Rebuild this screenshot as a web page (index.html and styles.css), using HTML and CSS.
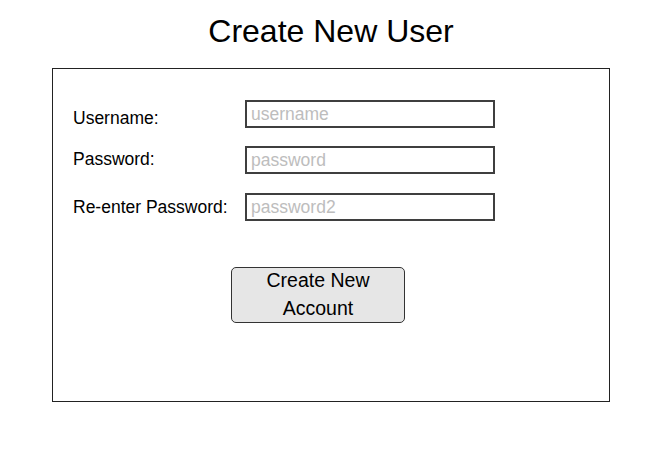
FILE: index.html
```html
<!DOCTYPE html>
<html lang="en">
<head>
<meta charset="utf-8">
<title>Create New User</title>
<link rel="stylesheet" href="styles.css">
</head>
<body>
<div class="page">
  <h1 class="title">Create New User</h1>
  <div class="card">
    <form class="form">
      <label class="label label-user" for="username">Username:</label>
      <input class="field" id="username" type="text" placeholder="username">
      <label class="label label-pass" for="password">Password:</label>
      <input class="field" id="password" type="password" placeholder="password">
      <label class="label label-pass2 row-third" for="password2">Re-enter Password:</label>
      <input class="field row-third" id="password2" type="password" placeholder="password2">
    </form>
    <button class="submit" type="button"><span class="submit-text">Create New Account</span></button>
  </div>
</div>
</body>
</html>
```
FILE: styles.css
```css
html, body {
  margin: 0;
  padding: 0;
  background: #ffffff;
}
body {
  font-family: "Liberation Sans", Arial, sans-serif;
  color: #000000;
}
.page {
  width: 558px;
  margin-left: 52px;
}
.title {
  margin: 13px 0 18px;
  font-size: 32px;
  line-height: 37px;
  font-weight: normal;
  text-align: center;
}
.card {
  box-sizing: border-box;
  height: 334px;
  border: 1px solid #222222;
  padding: 31px 0 0 20px;
}
.form {
  display: grid;
  grid-template-columns: 172px 250px;
  grid-template-rows: 28px 28px 29px;
  row-gap: 18px;
  align-items: end;
}
.label {
  align-self: start;
  font-size: 17.5px;
  line-height: 20px;
}
.label-user { padding-top: 7.5px; }
.label-pass { padding-top: 2.7px; }
.label-pass2 { padding-top: 4.5px; }
.field {
  box-sizing: border-box;
  width: 250px;
  height: 28px;
  margin: 0;
  border: 2px solid #3f3f3f;
  padding: 0 4px;
  font-family: "Liberation Sans", Arial, sans-serif;
  font-size: 17.5px;
  background: #ffffff;
  outline: none;
}
.field::placeholder {
  color: #bdbdbd;
  opacity: 1;
}
.submit {
  display: block;
  box-sizing: border-box;
  width: 174px;
  height: 56px;
  margin: 46px 0 0 158px;
  padding: 0 2px;
  border: 1px solid #333333;
  border-radius: 5px;
  background: #e6e6e6;
  font-family: "Liberation Sans", Arial, sans-serif;
  font-size: 19.5px;
  line-height: 28px;
  color: #000000;
  overflow: hidden;
}
.submit-text {
  display: block;
  margin-top: -2px;
}
```
